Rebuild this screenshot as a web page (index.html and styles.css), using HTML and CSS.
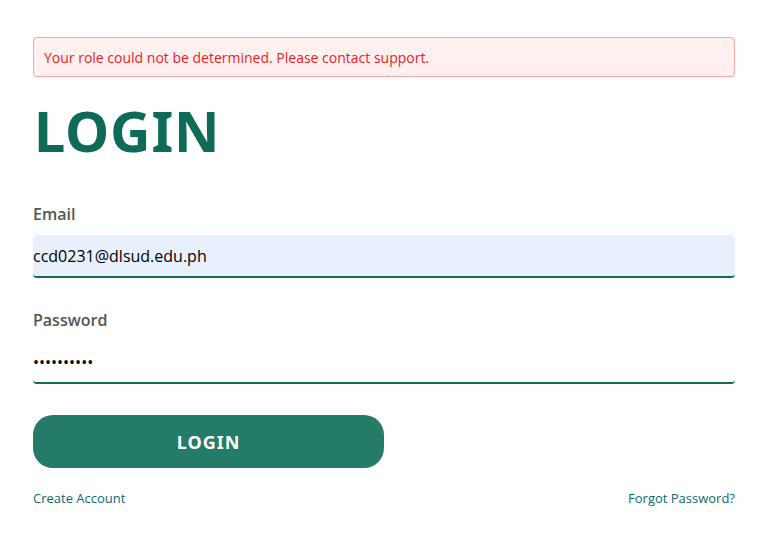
FILE: index.html
```html
<!DOCTYPE html>
<html lang="en">
<head>
<meta charset="utf-8">
<title>Login</title>
<link rel="stylesheet" href="styles.css">
</head>
<body>
<main class="page">
  <div class="alert">Your role could not be determined. Please contact support.</div>
  <h1 class="title">LOGIN</h1>
  <form class="form">
    <label class="label" for="email">Email</label>
    <input class="field field-filled" id="email" type="text" value="ccd0231@dlsud.edu.ph">
    <label class="label label-second" for="password">Password</label>
    <input class="field" id="password" type="password" value="password12">
    <button class="btn" type="button">LOGIN</button>
    <div class="links">
      <a class="link" href="#">Create Account</a>
      <a class="link" href="#">Forgot Password?</a>
    </div>
  </form>
</main>
</body>
</html>
```

FILE: styles.css
```css
* { box-sizing: border-box; }
html, body { margin: 0; padding: 0; background: #fff; }
body { font-family: "Open Sans", "Liberation Sans", sans-serif; color: #222; }

.page {
  padding: 37px 24px 0 33px;
}

.alert {
  height: 40px;
  border: 1px solid #f4a5a5;
  background: #fff0f0;
  border-radius: 4px;
  color: #ee1c25;
  font-size: 14px;
  line-height: 20px;
  padding: 10px 10px 8px;
}

.title {
  margin: 25px 0 0 1px;
  font-family: "Noto Sans", "DejaVu Sans", sans-serif;
  font-weight: 700;
  font-size: 56px;
  line-height: 56px;
  height: 56px;
  color: #0e6b57;
  letter-spacing: 0.8px;
}

.form {
  display: flex;
  flex-direction: column;
  margin-top: 45px;
}

.label {
  font-size: 16px;
  line-height: 22px;
  font-weight: 600;
  color: #555;
}
.label-second { margin-top: 31px; }

.field {
  margin-top: 10px;
  height: 43px;
  border: none;
  border-bottom: 2px solid #106b58;
  border-radius: 4px;
  background: transparent;
  padding: 0;
  font-family: "Open Sans", "Liberation Sans", sans-serif;
  font-size: 16px;
  color: #000;
  outline: none;
}
.field-filled { background: #e8f0fe; }

.btn {
  margin-top: 31px;
  width: 351px;
  height: 53px;
  border: none;
  border-radius: 20px;
  background: #237b68;
  color: #fff;
  font-family: "Noto Sans", "DejaVu Sans", sans-serif;
  font-weight: 700;
  font-size: 18px;
  letter-spacing: 1px;
}

.links {
  margin-top: 21px;
  display: flex;
  justify-content: space-between;
}
.link {
  font-size: 13px;
  line-height: 18px;
  color: #0e6b6b;
  text-decoration: none;
}
```
